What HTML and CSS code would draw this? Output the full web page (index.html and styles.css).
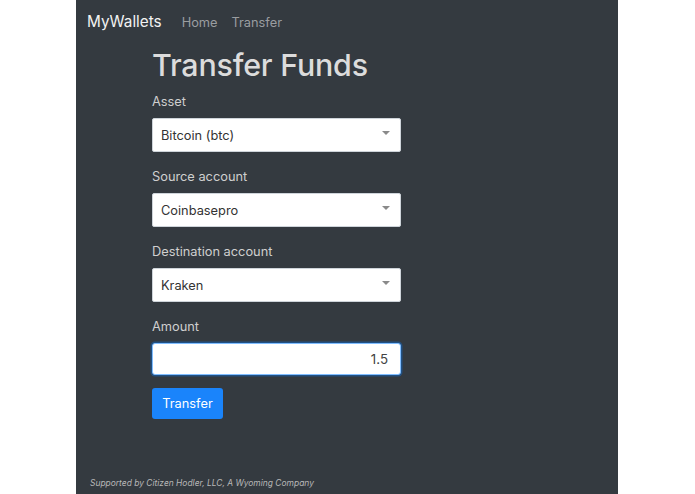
FILE: index.html
```html
<!DOCTYPE html>
<html>
<head>
<meta charset="utf-8">
<link rel="stylesheet" href="styles.css">
</head>
<body>
<div class="panel">
  <nav class="navbar">
    <span class="brand">MyWallets</span>
    <a class="nav-link">Home</a>
    <a class="nav-link">Transfer</a>
  </nav>
  <main class="content">
    <h1 class="title">Transfer Funds</h1>
    <div class="group">
      <label class="label">Asset</label>
      <div class="select"><span>Bitcoin (btc)</span><span class="caret"></span></div>
    </div>
    <div class="group">
      <label class="label">Source account</label>
      <div class="select"><span>Coinbasepro</span><span class="caret"></span></div>
    </div>
    <div class="group">
      <label class="label">Destination account</label>
      <div class="select"><span>Kraken</span><span class="caret"></span></div>
    </div>
    <div class="group">
      <label class="label">Amount</label>
      <div class="input">1.5</div>
    </div>
    <button class="btn">Transfer</button>
  </main>
  <footer class="footer">Supported by Citizen Hodler, LLC, A Wyoming Company</footer>
</div>
</body>
</html>
```

FILE: styles.css
```css
html, body {
  margin: 0;
  padding: 0;
  background: #ffffff;
  height: 100%;
}
body {
  font-family: "Inter", "Noto Sans", sans-serif;
}
.panel {
  margin-left: 76px;
  width: 542px;
  height: 494px;
  background: #343a40;
  display: flex;
  flex-direction: column;
}
.navbar {
  display: flex;
  align-items: baseline;
  padding: 12px 11px 0 11px;
  height: 32px;
}
.brand {
  color: #f2f2f2;
  font-size: 15.3px;
  margin-right: 20px;
}
.nav-link {
  color: #9a9da0;
  font-size: 12.8px;
  margin-right: 14px;
}
.content {
  padding-left: 76px;
  width: 249px;
  display: flex;
  flex-direction: column;
}
.title {
  margin: 0;
  font-size: 30.4px;
  font-weight: 500;
  color: #dcdcdc;
  line-height: 42px;
  letter-spacing: -0.2px;
}
.group {
  display: flex;
  flex-direction: column;
}
.label {
  color: #cfcfcf;
  font-size: 12.8px;
  height: 26px;
  line-height: 20px;
  margin-top: 6px;
}
.select, .input {
  box-sizing: border-box;
  height: 34px;
  background: #ffffff;
  border: 1px solid #ced4da;
  border-radius: 2px;
  display: flex;
  align-items: center;
  justify-content: space-between;
  padding: 0 10px 0 8px;
  color: #333;
  font-size: 12.8px;
  margin-bottom: 9px;
}
.caret {
  width: 0;
  height: 0;
  border-left: 4px solid transparent;
  border-right: 4px solid transparent;
  border-top: 4.5px solid #8a8a8a;
  margin-top: -4px;
}
.input {
  justify-content: flex-end;
  border: 1px solid #80bdff;
  box-shadow: 0 0 0 1.5px rgba(0, 123, 255, 0.35);
  border-radius: 3px;
  height: 32px;
  padding-right: 12px;
  font-size: 13.3px;
  color: #444;
}
.btn {
  align-self: flex-start;
  margin-top: 4px;
  width: 71px;
  height: 31px;
  background: #1a84fb;
  color: #ffffff;
  border: none;
  border-radius: 3px;
  font-family: "Inter", "Noto Sans", sans-serif;
  font-size: 12.8px;
  padding: 0;
}
.footer {
  margin-top: auto;
  padding: 0 0 6px 14px;
  font-size: 8.45px;
  font-style: italic;
  color: #b8b8b8;
}
```
